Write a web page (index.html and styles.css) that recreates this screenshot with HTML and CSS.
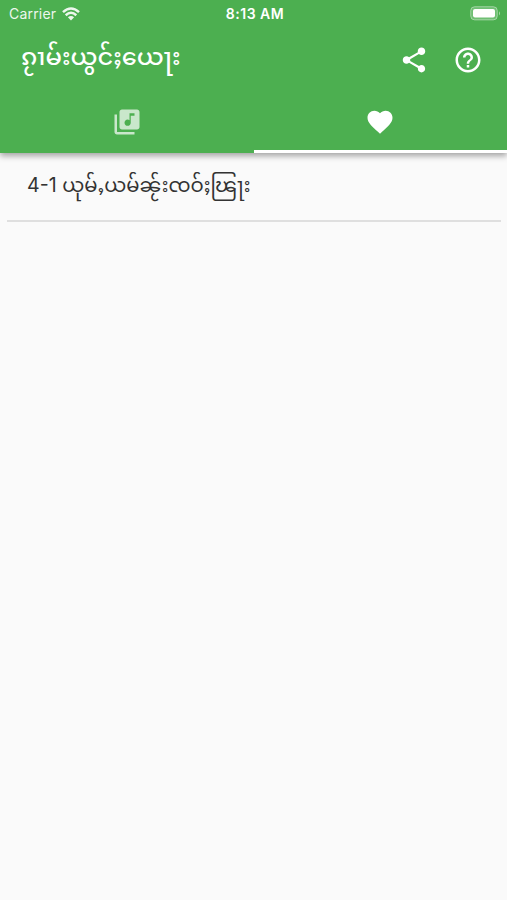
FILE: index.html
```html
<!DOCTYPE html>
<html lang="shn">
<head>
  <meta charset="UTF-8" />
  <meta name="viewport" content="width=device-width, initial-scale=1" />
  <title>ၵႂၢမ်းယွင်ႈယေႃး</title>
  <link rel="stylesheet" href="styles.css">
</head>
<body>
  <header class="app-bar">
    <div class="status-bar">
      <div class="carrier">
        <span class="carrier-name">Carrier</span>
        <svg class="wifi" viewBox="0 0 18 14">
          <path d="M1 5.2Q9-2.2 17 5.2" />
          <path d="M3.7 8.2Q9 3.4 14.3 8.2" />
          <path class="dot" d="M5.9 10.3Q9 7.8 12.1 10.3L9 13.6Z" />
        </svg>
      </div>
      <div class="clock">8:13 AM</div>
      <div class="battery-wrap">
        <svg class="battery" viewBox="0 0 31 15">
          <rect class="case" x="0.7" y="0.7" width="26.6" height="13.2" rx="4" />
          <rect class="level" x="3" y="3" width="22" height="8.6" rx="2" />
          <path class="tip" d="M29 5.2Q31 7.3 29 9.4Z" />
        </svg>
      </div>
    </div>

    <div class="toolbar">
      <h1 class="title">ၵႂၢမ်းယွင်ႈယေႃး</h1>
      <button class="icon-btn" aria-label="Share">
        <svg viewBox="0 0 24 24"><path d="M18 16.08c-.76 0-1.44.3-1.96.77L8.91 12.7c.05-.23.09-.46.09-.7s-.04-.47-.09-.7l7.05-4.11c.54.5 1.25.81 2.04.81 1.66 0 3-1.34 3-3s-1.34-3-3-3-3 1.34-3 3c0 .24.04.47.09.7L8.04 9.81C7.5 9.31 6.79 9 6 9c-1.66 0-3 1.34-3 3s1.34 3 3 3c.79 0 1.5-.31 2.04-.81l7.12 4.16c-.05.21-.08.43-.08.65 0 1.61 1.31 2.92 2.92 2.92s2.92-1.31 2.92-2.92-1.31-2.92-2.92-2.92z"/></svg>
      </button>
      <button class="icon-btn" aria-label="Help">
        <svg viewBox="0 0 24 24"><path d="M11 18h2v-2h-2v2zm1-16C6.48 2 2 6.48 2 12s4.48 10 10 10 10-4.48 10-10S17.52 2 12 2zm0 18c-4.41 0-8-3.59-8-8s3.59-8 8-8 8 3.59 8 8-3.59 8-8 8zm0-14c-2.21 0-4 1.79-4 4h2c0-1.1.9-2 2-2s2 .9 2 2c0 2-3 1.75-3 5h2c0-2.25 3-2.5 3-5 0-2.21-1.79-4-4-4z"/></svg>
      </button>
    </div>

    <nav class="tabs">
      <button class="tab" aria-label="Songs">
        <svg viewBox="0 0 24 24"><path d="M20 2H8c-1.1 0-2 .9-2 2v12c0 1.1.9 2 2 2h12c1.1 0 2-.9 2-2V4c0-1.1-.9-2-2-2zm-2 5h-3v5.5c0 1.38-1.12 2.5-2.5 2.5S10 13.88 10 12.5s1.12-2.5 2.5-2.5c.57 0 1.08.19 1.5.51V5h4v2zM4 6H2v14c0 1.1.9 2 2 2h14v-2H4V6z"/></svg>
      </button>
      <button class="tab active" aria-label="Favorites">
        <svg viewBox="0 0 24 24"><path d="M12 21.35l-1.45-1.32C5.4 15.36 2 12.28 2 8.5 2 5.42 4.42 3 7.5 3c1.74 0 3.41.81 4.5 2.09C13.09 3.81 14.76 3 16.5 3 19.58 3 22 5.42 22 8.5c0 3.78-3.4 6.86-8.55 11.54L12 21.35z"/></svg>
      </button>
    </nav>
  </header>

  <main class="song-list">
    <div class="song">4-1 ယုမ်ႇယမ်ၼႂ်းၸဝ်ႈၽြႃး</div>
  </main>
</body>
</html>
```
FILE: styles.css
```css
html, body {
  margin: 0;
  height: 100%;
  background: #fafafa;
  font-family: Inter, "Noto Sans Myanmar", "Noto Sans", sans-serif;
  overflow: hidden;
}
button {
  border: none;
  background: none;
  padding: 0;
  color: inherit;
}
svg {
  display: block;
  fill: currentColor;
}

.app-bar {
  height: 153px;
  display: flex;
  flex-direction: column;
  background: #4caf50;
  color: #fff;
  box-shadow: 0 3px 6px rgba(0,0,0,0.35);
}

.status-bar {
  height: 27px;
  display: grid;
  grid-template-columns: 1fr auto 1fr;
  align-items: center;
  padding: 0 6px 0 9px;
  box-sizing: border-box;
  font-size: 14px;
}
.carrier {
  display: flex;
  align-items: center;
  gap: 6px;
  opacity: 0.9;
}
.carrier-name { letter-spacing: 0.2px; }
.wifi {
  width: 18px;
  height: 14px;
  fill: none;
  stroke: #fff;
  stroke-width: 2.5;
}
.wifi .dot {
  fill: #fff;
  stroke: none;
}
.clock {
  font-weight: 600;
  font-size: 14px;
  letter-spacing: 0.5px;
}
.battery {
  width: 31px;
  height: 15px;
  margin-left: auto;
}
.battery .case {
  fill: rgba(255,255,255,0.2);
  stroke: rgba(255,255,255,0.4);
}
.battery .tip { opacity: 0.5; }

.toolbar {
  height: 65px;
  display: flex;
  align-items: center;
  padding: 0 12px 0 21px;
}
.title {
  flex: 1;
  margin: 0;
  padding-bottom: 6px;
  font-size: 24.1px;
  font-weight: 500;
  line-height: 40px;
  white-space: nowrap;
}
.icon-btn {
  width: 54px;
  height: 54px;
  display: flex;
  align-items: center;
  justify-content: center;
}
.icon-btn svg {
  width: 30px;
  height: 30px;
}

.tabs {
  flex: 1;
  display: flex;
}
.tab {
  flex: 1;
  display: flex;
  align-items: center;
  justify-content: center;
  padding-top: 2px;
  border-bottom: 3px solid transparent;
  color: rgba(255,255,255,0.7);
}
.tab svg {
  width: 30px;
  height: 30px;
}
.tab.active {
  color: #fff;
  border-bottom-color: #fff;
}

.song-list { padding: 0 6px 0 7px; }
.song {
  height: 69px;
  padding: 0 20px;
  box-sizing: border-box;
  border-bottom: 2px solid #dfdfdf;
  color: #333;
  font-size: 19.6px;
  line-height: 64px;
  white-space: nowrap;
}
```
